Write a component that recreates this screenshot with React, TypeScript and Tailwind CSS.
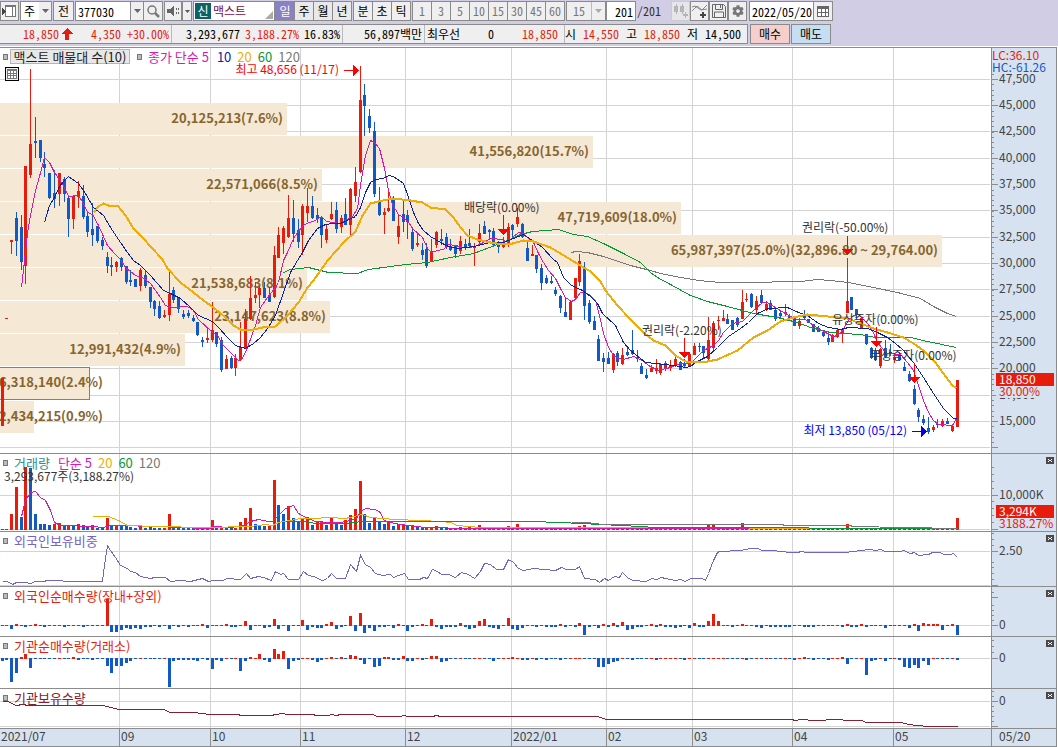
import React, { useState } from 'react';
import { FaCog } from 'react-icons/fa';

const UP = '#e81c0c';
const DOWN = '#1259c8';
const GRID = '#d3d3d3';
const LINE = '#8c8c8c';

const MONTHS = [
    { x: 119, label: '09' },
    { x: 210, label: '10' },
    { x: 300, label: '11' },
    { x: 405, label: '12' },
    { x: 511, label: '2022/01' },
    { x: 606, label: '02' },
    { x: 692, label: '03' },
    { x: 792, label: '04' },
    { x: 893, label: '05' },
];

const PRICES = [
    { y: 79, label: '47,500' },
    { y: 105, label: '45,000' },
    { y: 131, label: '42,500' },
    { y: 158, label: '40,000' },
    { y: 184, label: '37,500' },
    { y: 210, label: '35,000' },
    { y: 237, label: '32,500' },
    { y: 263, label: '30,000' },
    { y: 289, label: '27,500' },
    { y: 316, label: '25,000' },
    { y: 342, label: '22,500' },
    { y: 368, label: '20,000' },
    { y: 395, label: '17,500' },
    { y: 421, label: '15,000' },
    { y: 447, label: '' },
];

const BANDS = [
    { y: 103, w: 287, end: 283, label: '20,125,213(7.6%)' },
    { y: 136, w: 593, end: 589, label: '41,556,820(15.7%)' },
    { y: 169, w: 322, end: 318, label: '22,571,066(8.5%)' },
    { y: 202, w: 681, end: 677, label: '47,719,609(18.0%)' },
    { y: 235, w: 942, end: 938, label: '65,987,397(25.0%)(32,896.80 ~ 29,764.00)' },
    { y: 268, w: 307, end: 303, label: '21,538,683(8.1%)' },
    { y: 301, w: 330, end: 326, label: '23,147,623(8.8%)' },
    { y: 334, w: 185, end: 181, label: '12,991,432(4.9%)' },
    { y: 367, w: 90, end: 103, label: '6,318,140(2.4%)', current: true },
    { y: 401, w: 34, end: 103, label: '2,434,215(0.9%)' },
];

const EVENTS = [
    { x: 503, y: 215, tip: 235, tx: 464, ty: 212, label: '배당락(0.00%)' },
    { x: 684, y: 338, tip: 358, tx: 642, ty: 335, label: '권리락(-2.20%)' },
    { x: 847, y: 236, tip: 255, tx: 802, ty: 232, label: '권리락(-50.00%)' },
    { x: 876, y: 327, tip: 347, tx: 832, ty: 324, label: '유상증자(0.00%)' },
    { x: 914, y: 363, tip: 383, tx: 870, ty: 360, label: '무상증자(0.00%)' },
];

// one candle per entry: high, body top, body bottom, low, colour
const CANDLES = `378 378 426 426 r|318 318 319 319 r|240 240 242 254 r|212 218 241 256 b|215 227 262 270 b|166 166 266 284 r|69 144 175 178 r|117 141 143 158 b|140 140 158 162 b|152 164 168 177 b
173 173 198 199 b|170 193 199 208 b|173 173 194 206 r|177 179 194 202 b|195 198 219 237 b|196 196 219 229 r|181 191 197 208 r|185 196 217 219 b|212 216 232 237 b|203 229 235 246 b
226 226 241 243 b|237 240 246 250 b|252 257 266 273 b|257 265 267 276 b|261 262 267 272 r|257 258 267 271 b|266 266 282 284 b|270 280 282 286 b|279 279 287 287 b|268 270 286 291 r
271 275 286 288 b|287 287 302 308 b|300 301 309 316 b|301 306 318 319 b|310 315 317 318 r|272 294 315 321 r|287 290 300 303 b|297 297 309 313 b|310 314 317 319 b|310 313 316 318 b
315 318 321 322 b|322 322 335 336 b|337 340 342 347 b|329 338 340 343 r|302 330 340 342 r|332 332 344 347 b|337 340 370 372 b|355 359 369 369 r|356 358 368 369 b|354 358 368 376 r
322 347 360 361 r|309 319 348 349 r|276 298 319 320 r|282 295 298 303 r|286 288 295 308 r|282 288 298 298 b|287 295 302 302 b|246 255 297 298 r|227 235 258 258 r|226 228 243 254 r
195 218 237 238 r|200 218 234 242 b|219 230 242 248 b|204 206 235 255 r|188 206 213 222 r|196 206 218 219 b|208 215 219 223 b|217 218 235 248 b|225 229 240 243 r|202 214 219 220 r
202 210 229 233 b|215 218 227 233 r|198 214 225 225 b|188 189 225 235 r|167 182 196 202 r|66 100 172 173 r|84 95 106 136 b|109 116 128 133 b|122 131 194 197 b|187 202 215 216 b
208 212 215 234 r|189 208 211 212 r|196 200 221 221 b|214 226 237 244 r|199 214 222 232 b|210 215 222 239 b|228 232 249 251 b|232 243 245 247 r|243 250 255 260 b|243 249 266 268 b
239 251 261 261 r|231 232 245 248 r|229 239 241 245 b|233 237 247 249 b|239 246 250 251 b|246 246 254 258 b|236 241 251 254 r|239 244 248 250 b|229 243 246 247 b|243 246 248 266 r
224 233 242 246 r|221 226 234 234 b|229 230 232 238 b|228 231 245 246 b|241 243 247 253 b|237 242 247 248 r|223 227 243 247 r|224 225 230 238 b|208 217 224 227 r|223 224 237 238 b
241 248 261 261 b|245 254 256 256 r|255 255 269 273 b|264 268 283 290 b|275 278 283 284 b|276 281 283 284 b|287 290 294 296 b|295 296 308 313 b|298 312 317 317 b|300 302 320 320 r
278 278 298 300 r|254 261 282 286 r|262 269 306 320 b|300 303 322 324 b|316 321 330 330 b|335 339 361 361 b|353 358 362 372 b|352 358 364 364 b|353 354 370 373 r|351 353 362 366 b
348 355 364 365 r|347 352 355 356 b|330 350 354 355 b|350 357 359 362 b|363 366 374 374 b|369 375 378 379 b|365 368 372 372 r|359 368 371 374 r|363 364 373 375 r|361 363 369 371 r
360 366 368 371 r|357 359 366 367 r|361 362 370 370 b|359 364 366 368 b|352 354 366 366 r|343 346 355 355 r|343 346 347 352 b|346 346 353 358 b|317 340 359 362 r|321 323 348 352 r
316 320 321 330 r|310 318 321 321 r|314 319 324 324 b|320 320 330 330 b|317 318 325 327 b|290 302 319 319 r|293 299 300 302 r|293 294 307 308 b|296 301 310 315 r|290 295 303 303 b
301 304 309 311 r|300 303 310 310 b|307 310 319 321 b|310 313 316 318 b|304 312 314 316 r|314 316 318 318 b|318 318 326 326 b|318 321 326 329 r|310 316 318 320 b|319 319 323 323 b
324 324 332 332 b|326 328 332 332 b|331 332 336 337 b|335 338 342 345 b|334 335 342 342 r|328 330 337 338 r|329 329 334 343 r|258 301 313 313 r|297 297 310 310 b|309 309 315 320 b
317 318 328 329 r|334 334 344 345 b|347 348 358 359 b|348 351 360 361 b|348 349 366 368 r|340 348 357 358 b|344 352 354 356 b|356 357 360 363 r|352 354 360 361 b|362 367 371 371 b
371 374 381 382 b|385 389 404 405 b|408 410 417 422 b|415 419 423 425 b|417 428 432 434 b|425 427 430 432 r|419 424 425 428 b|419 421 426 427 r|418 421 424 424 b|425 426 431 432 r
380 380 427 427 r`
    .split(/[|\n]/)
    .map((row) => {
        const [high, top, bottom, low, color] = row.trim().split(' ');
        return { high: +high, top: +top, bottom: +bottom, low: +low, color: color === 'r' ? UP : DOWN };
    });

const MA5 = '21,287 27,233 30,215 35,190 39,176 44,157 49,162 54,172 59,179 64,187 68,196 78,195 83,203 87,212 92,214 98,225 107,245 115,254 120,259 125,267 135,275 142,277 150,283 160,297 165,305 172,307 187,306 193,310 198,319 212,332 217,335 223,345 230,352 238,360 242,358 247,347 255,325 260,307 267,297 275,287 278,282 283,260 287,252 293,238 297,232 303,225 308,222 313,221 321,216 326,221 340,223 345,220 352,216 357,208 360,185 365,155 370,140 374,142 379,148 384,168 388,190 392,204 398,214 403,217 408,222 413,229 422,237 427,248 431,252 437,250 443,249 448,244 455,245 463,247 470,247 477,245 483,242 490,238 502,239 507,242 512,237 518,232 522,233 527,237 533,242 538,253 543,262 548,270 555,278 560,288 565,297 571,301 575,299 580,292 585,292 590,295 595,300 599,315 603,333 608,347 613,355 618,358 623,359 633,356 642,360 648,365 658,370 670,367 680,363 690,363 695,358 703,350 713,345 718,340 723,332 732,323 742,321 748,315 755,308 762,302 767,302 773,306 780,310 788,315 797,319 805,319 813,325 823,331 833,336 837,335 842,330 848,320 853,315 858,314 862,318 867,323 872,330 877,342 881,347 886,353 900,354 907,362 913,370 918,385 923,400 928,412 933,420 938,424 952,425 956,418';
const MA10 = '44,222 49,205 54,197 59,186 64,180 68,176 78,183 85,193 93,207 103,215 112,230 120,242 127,252 133,260 140,265 150,275 163,290 170,293 180,298 190,307 198,315 212,321 218,327 227,337 235,345 245,348 253,343 260,337 267,328 275,315 283,292 290,272 297,260 302,252 308,240 317,228 325,224 333,223 340,223 355,216 360,207 365,192 370,182 375,179 383,178 388,175 393,176 403,183 408,197 413,212 418,223 423,230 430,236 440,242 448,246 458,248 473,246 490,242 503,242 513,238 523,234 532,240 542,247 553,259 557,262 563,277 571,285 582,290 590,296 597,303 602,313 615,325 623,342 630,350 640,358 645,362 655,363 673,365 685,367 690,366 695,362 707,356 717,347 728,336 740,328 748,322 757,313 768,308 787,307 798,312 807,315 818,323 828,327 840,329 848,327 867,328 877,332 887,337 895,343 902,349 913,362 923,377 933,393 943,408 953,418 956,418';
const MA20 = '93,212 98,206 103,203 108,205 117,205 125,215 133,228 143,238 150,246 162,259 167,268 180,282 193,292 203,300 213,307 225,317 233,325 240,329 253,329 262,327 275,326 287,315 298,302 307,287 313,280 325,263 328,259 343,242 355,231 362,215 370,203 378,201 392,198 410,200 422,202 430,207 445,209 453,217 460,227 467,235 477,239 490,242 503,244 512,243 523,240 533,241 550,247 560,253 570,259 578,264 590,271 600,281 605,290 617,305 630,319 643,332 653,340 665,345 675,355 685,361 702,362 717,359 737,350 753,337 767,330 780,321 793,317 807,314 827,316 847,318 860,323 873,328 887,332 903,337 913,343 923,350 935,362 942,372 952,385 956,388';
const MA60 = '283,272 290,269 308,267 328,272 357,273 368,269 405,264 427,262 450,257 473,253 497,244 512,238 520,234 532,231 558,229 573,234 587,236 603,243 623,253 640,262 650,272 657,277 670,284 690,295 707,301 727,306 753,313 777,317 797,322 810,327 830,332 843,333 860,334 875,337 910,337 927,341 956,347';
const MA120 = '571,252 575,251 587,252 603,256 630,265 650,270 660,273 680,277 698,280 720,282 763,282 780,281 800,281 817,279 830,280 848,282 873,287 897,292 920,298 933,306 947,313 956,316';

// bar heights, negative numbers are down days
const VOLUME = [
    -1, -1, 16, 43, -13, 63, -62, -16, -6, -6, -5, 6, 7, -4, 4, -4, 6, -5, -3, 5, -2, -2, 12, -4, 4, -4, -5, -3, -2, 4,
    -2, -3, -2, -2, 2, 16, -3, -2, -2, -2, -2, 3, -2, 2, 10, -3, 3, -2, -2, 2, 8, 12, 22, -6, -5, -4, 4, 50, -25, -16,
    24, -12, -8, 12, 13, -5, 9, 9, -5, 12, -8, -5, 10, 15, 21, 49, -16, -7, 12, -8, -6, 8, -4, 6, 6, -4, 5, -3, -2, 2,
    3, 4, -2, -2, -2, -2, 3, -2, 3, 2, 5, -3, -2, 2, 2, 2, 4, -3, 6, -2, -2, 2, -2, -2, -2, -2, -2, -2, -2, 3, 3, 4, 5,
];
const VOLUME_LATE: Record<number, number> = { 132: 4, 148: 5, 149: 5, 155: 7, 177: 6, 200: 12 };

const VOL_MA5 = '21,516 25,500 30,492 35,491 40,497 45,500 50,510 54,522 60,525 92,526 103,527 110,525 125,525 150,526 190,527 195,528 210,528 212,526 230,527 243,525 250,521 258,519 268,521 272,521 278,515 285,508 293,505 298,513 305,517 315,521 325,522 340,522 350,520 356,518 360,511 365,508 374,509 379,511 384,520 390,522 400,524 425,527 470,528 957,528';
const VOL_MA20 = '92,516 108,516 118,520 127,525 155,526 205,527 250,526 265,524 272,525 278,522 290,520 300,518 312,518 330,517 345,518 362,514 370,517 395,519 420,520 440,521 450,522 457,525 480,527 650,527 845,528';
const VOL_MA60 = '285,521 305,521 315,523 345,523 362,521 530,521 560,522 600,524 640,526 655,527 957,528';
const VOL_MA120 = '571,522 587,522 602,524 782,524 784,525 850,525 852,526 905,527 957,528';

const FOREIGN = '2,581 7,581 12,584 16,582 25,582 30,583 35,581 43,581 47,580 62,580 63,581 102,581 104,565 107,545 110,550 115,557 120,565 127,568 130,571 135,572 140,576 145,577 150,578 154,577 165,577 170,581 180,580 190,581 202,578 208,581 213,580 222,580 227,578 240,579 246,573 250,578 258,576 263,577 271,580 275,571 280,574 283,573 288,579 298,579 303,571 308,575 313,576 322,580 327,578 331,573 336,578 345,578 350,564 356,571 360,555 365,564 370,567 375,573 382,575 390,574 393,577 398,575 404,573 408,579 419,579 423,577 427,578 432,569 437,571 441,574 448,574 455,577 461,572 468,574 474,578 480,571 484,563 490,564 496,569 503,569 508,559 513,562 518,568 523,570 533,568 555,570 561,567 566,569 575,569 579,566 584,578 595,579 599,582 604,578 608,580 614,576 619,577 622,572 628,578 633,580 646,581 651,578 656,579 661,577 665,578 675,580 680,579 685,581 690,578 702,578 705,580 708,573 713,560 717,552 719,551 740,550 750,548 758,548 761,550 772,550 790,552 798,552 800,551 807,552 845,552 860,550 870,549 875,550 880,549 885,551 900,551 903,550 910,553 914,552 918,555 928,554 932,552 940,552 943,554 950,554 953,553 957,557';
const HOLDING = '2,701 7,701 16,705 22,704 28,705 102,705 119,709 164,709 169,712 195,712 200,713 210,714 238,714 240,715 272,715 274,714 283,713 286,714 312,714 316,715 328,715 331,714 336,715 340,714 372,714 377,716 400,716 403,715 408,716 432,716 436,715 440,716 597,716 606,719 792,719 794,720 802,719 812,720 840,719 845,720 862,720 865,722 901,722 908,724 917,725 927,726 957,726';

const FOREIGN_NET: Record<number, number> = {
    2: -3, 3: 1, 5: -1, 7: 1, 9: -1, 13: -1, 17: -1, 22: 26, 23: -6, 24: -6, 25: -4, 26: -2, 27: -3, 28: -2, 29: -3, 30: -1, 31: -1, 33: -1, 35: -3, 37: -1, 39: -1,
    42: 1, 43: -2, 47: 1, 48: -1, 49: -1, 51: 4, 52: -4, 55: -2, 56: -1, 57: 6, 58: -3, 60: -5, 63: 5, 64: -4, 65: -1, 66: -2, 67: -2, 68: 1, 69: 3, 70: -3, 71: -1,
    73: 9, 74: -5, 75: 12, 76: -7, 77: -2, 78: -5, 79: -1, 80: -1, 82: -2, 83: 1, 85: -5, 86: -1, 88: 1, 90: 6, 91: -1, 92: -3, 93: -1, 94: -1, 95: -1, 96: 2, 97: -1,
    98: -3, 99: -2, 100: 4, 101: 6, 102: -1, 103: -2, 104: -3, 106: 7, 107: -3, 108: -4, 109: -2, 112: -1, 114: -1, 115: -1, 116: -1, 117: 1, 118: -1, 120: -1, 121: 2,
    122: -9, 123: -1, 125: -2, 126: 1, 127: -1, 128: 2, 129: -1, 130: 3, 131: -4, 132: -3, 133: -1, 134: -1, 136: 1, 137: -1, 138: 1, 139: -1, 140: -1, 141: -2, 142: -1,
    144: -2, 145: 2, 146: -1, 147: -1, 148: 4, 149: 11, 150: 4, 153: -1, 155: 1, 158: -1, 159: -2, 161: -1, 162: -1, 163: -1, 164: -1, 165: -1, 168: -1, 169: -1, 170: -1,
    176: -1, 177: 1, 178: -1, 179: -1, 180: 1, 181: -1, 185: -2, 190: -2, 191: 1, 192: -5, 193: 2, 194: 1, 195: 1, 196: 1, 197: -4, 199: 1, 200: -9,
};
const INST_NET: Record<number, number> = {
    0: -2, 1: -1, 2: -23, 3: -14, 4: 1, 5: 4, 6: -9, 15: 1, 16: -1, 19: -1, 22: -7, 23: -14, 24: -7, 25: -7, 26: -4, 27: -2, 35: -28, 36: -2, 37: -1, 38: -1, 39: -1,
    40: -1, 41: -2, 43: -1, 44: -10, 45: -1, 46: -2, 50: -12, 51: -2, 52: 1, 54: 4, 55: -1, 56: -3, 57: 9, 58: 4, 59: 7, 60: -10, 61: -2, 62: -1, 65: -1, 66: -3, 67: -1,
    69: 1, 71: 1, 73: 3, 74: 2, 75: -1, 76: -5, 78: -8, 79: -7, 80: 1, 81: 1, 82: -1, 83: -1, 84: 2, 85: -2, 86: -2, 88: -1, 90: 2, 91: 2, 92: -3, 93: -2, 103: -2,
    107: 1, 109: -1, 110: -1, 112: -1, 114: -1, 117: -1, 125: -8, 126: -8, 127: -5, 128: -3, 129: -2, 132: -1, 137: -1, 143: -1, 156: -1, 166: -1, 168: 1, 170: -1,
    173: -1, 176: 1, 177: -5, 181: -16, 182: -2, 183: -1, 185: -2, 188: -1, 189: -8, 190: -9, 191: -6, 192: -9, 193: -2, 194: -6, 200: -1,
};

const xAt = (i: number) => Math.floor(2 + i * 4.775);

const Line = ({ points, color, width = 1 }: { points: string; color: string; width?: number }) => (
    <polyline points={points} fill="none" stroke={color} strokeWidth={width} transform="translate(0.5 0.5)" />
);

const NetBars = ({ data, zero }: { data: Record<number, number>; zero: number }) => (
    <>
        {CANDLES.map((c, i) => {
            const v = data[i] || 0;
            if (v === 0) {
                return <rect key={i} x={xAt(i) - 1} y={zero} width={3} height={1} fill={c.color} />;
            }
            return <rect key={i} x={xAt(i) - 1} y={v > 0 ? zero - v : zero} width={3} height={Math.abs(v) + 1} fill={v > 0 ? UP : DOWN} />;
        })}
    </>
);

const Marker = () => <span className="h-[6px] w-[5px] shrink-0 border border-[#777] bg-[#bbb]" />;

const CloseButton = () => (
    <button aria-label="닫기" className="absolute top-[3px] right-[2px] h-[7px] w-2 bg-[#4a4a4a]">
        <svg viewBox="0 0 8 7" className="block h-full w-full" shapeRendering="crispEdges">
            <path d="M2 2h1v1h-1zM5 2h1v1h-1zM3 3h2v1h-2zM2 4h1v1h-1zM5 4h1v1h-1z" fill="#fff" />
        </svg>
    </button>
);

type PanelProps = {
    top: number;
    height: number;
    hLines: number[];
    ticks: number[];
    majors: number[];
    axis?: React.ReactNode;
    legend?: React.ReactNode;
    closable?: boolean;
    children: React.ReactNode;
};

const Panel = ({ top, height, hLines, ticks, majors, axis, legend, closable = true, children }: PanelProps) => (
    <section className="grid grid-cols-[991fr_65fr] border-t border-[#8c8c8c]">
        <div className="relative">
            <svg viewBox={`0 ${top} 991 ${height}`} className="block w-full overflow-visible text-[12px]" shapeRendering="crispEdges">
                {MONTHS.map((m) => <rect key={m.x} x={m.x} y={top} width={1} height={height} fill={GRID} />)}
                {hLines.map((y) => <rect key={y} x={0} y={y} width={990} height={1} fill={GRID} />)}
                {children}
            </svg>
            {legend}
        </div>
        <div className="relative bg-[#d6e2f0]">
            <svg viewBox={`991 ${top} 65 ${height}`} className="block w-full overflow-visible text-[12px]" fill="#444" shapeRendering="crispEdges">
                <rect x={991} y={top} width={1} height={height} fill={LINE} />
                {ticks.map((y) => <rect key={y} x={992} y={y} width={2} height={1} fill={LINE} />)}
                {majors.map((y) => <rect key={y} x={992} y={y} width={6} height={1} fill={LINE} />)}
                {axis}
            </svg>
            {closable && <CloseButton />}
        </div>
    </section>
);

const Legend = ({ children }: { children: React.ReactNode }) => (
    <div className="absolute top-px left-[3px] flex h-4 items-center gap-[6px] text-[13px] leading-4 whitespace-nowrap">
        <Marker />
        {children}
    </div>
);

const minorTicks = Array.from({ length: 72 }, (_, i) => Math.round(79 + (i - 1) * 5.2632)).filter((y) => y < 452);

const PricePanel = () => (
    <Panel
        top={48}
        height={405}
        hLines={PRICES.map((p) => p.y)}
        ticks={minorTicks}
        majors={PRICES.map((p) => p.y)}
        closable={false}
        axis={
            <>
                {PRICES.map((p) => <text key={p.y} x={999} y={p.y + 4}>{p.label}</text>)}
                <rect x={992} y={48} width={64} height={26} fill="#d6e2f0" />
                <text x={992} y={60} fill={UP}>LC:36.10</text>
                <text x={992} y={72} fill={DOWN}>HC:-61.26</text>
                <rect x={996} y={386} width={58} height={12} fill="#d6e2f0" />
                <rect x={996} y={373} width={58} height={13} fill={UP} />
                <text x={999} y={384} fill="#fff">18,850</text>
                <text x={999} y={396} fill={UP}>30.00%</text>
            </>
        }
        legend={
            <>
                <div className="absolute top-px left-[3px] flex h-[15px] items-center text-[13px] leading-3 whitespace-nowrap">
                    <Marker />
                    <button className="ml-[2px] h-[15px] w-[120px] border border-[#b5b5b5] bg-[#e8e8e8] leading-3 text-[#222]">맥스트 매물대 수(10)</button>
                    <span className="ml-[7px] flex items-center gap-[6px]">
                        <Marker />
                        <span className="text-[#d918b0]">종가 단순 5</span>
                    </span>
                    <span className="ml-2 flex gap-[6px]">
                        <span className="text-[#0a22a0]">10</span>
                        <span className="text-[#efac05]">20</span>
                        <span className="text-[#0a9632]">60</span>
                        <span className="text-[#777]">120</span>
                    </span>
                </div>
                <button aria-label="표 보기" className="absolute top-[19px] left-[5px] h-[14px] w-[14px] border border-black bg-[#eee]">
                    <svg viewBox="0 0 12 12" className="block h-3 w-3" shapeRendering="crispEdges">
                        <rect x={1} y={1} width={10} height={10} fill="#777" />
                        <path d="M2 3h2v2h-2zM5 3h2v2h-2zM8 3h2v2h-2zM2 6h2v1h-2zM5 6h2v1h-2zM8 6h2v1h-2zM2 8h2v2h-2zM5 8h2v2h-2zM8 8h2v2h-2z" fill="#fff" />
                    </svg>
                </button>
            </>
        }
    >
        {BANDS.map((b) => (
            <g key={b.y}>
                <rect x={0} y={b.y} width={b.w} height={32} fill="#f5e8d5" />
                {b.current && <path d={`M0 ${b.y + 0.5}H${b.w - 0.5}V${b.y + 32.5}H0`} fill="none" stroke="#808080" />}
                <text x={b.end} y={b.y + 20} textAnchor="end" fill="#86652f" className="text-[13px] font-bold">{b.label}</text>
            </g>
        ))}
        {CANDLES.map((c, i) => (
            <g key={i} fill={c.color}>
                <rect x={xAt(i)} y={c.high} width={1} height={c.low - c.high} />
                <rect x={xAt(i) - 1} y={c.top} width={3} height={c.bottom - c.top} />
            </g>
        ))}
        <Line points={MA120} color="#777" />
        <Line points={MA60} color="#0a9632" />
        <Line points={MA5} color="#d918b0" />
        <Line points={MA10} color="#0a22a0" />
        <Line points={MA20} color="#efac05" width={2} />
        {EVENTS.map((e) => (
            <g key={e.label} fill="#f00">
                <rect x={e.x} y={e.y} width={1} height={e.tip - e.y - 5} />
                <path d={`M${e.x - 5} ${e.tip - 6}H${e.x + 6}L${e.x + 0.5} ${e.tip}z`} />
                <text x={e.tx} y={e.ty} fill="#333">{e.label}</text>
            </g>
        ))}
        <g fill="#f00">
            <text x={339} y={74} textAnchor="end">최고 48,656 (11/17)</text>
            <rect x={344} y={70} width={10} height={1} />
            <path d="M353 65V76L359 70.5z" />
        </g>
        <g fill="#00f">
            <text x={907} y={435} textAnchor="end">최저 13,850 (05/12)</text>
            <rect x={912} y={431} width={10} height={1} />
            <path d="M921 426V437L927 431.5z" />
        </g>
    </Panel>
);

const VolumePanel = () => (
    <Panel
        top={454}
        height={77}
        hLines={[495, 529]}
        ticks={[467, 474, 481, 488, 501, 508, 515, 522]}
        majors={[495, 529]}
        axis={
            <>
                <text x={999} y={499}>10,000K</text>
                <rect x={996} y={505} width={58} height={13} fill={UP} />
                <text x={999} y={516} fill="#fff">3,294K</text>
                <text x={999} y={528} fill={UP}>3188.27%</text>
            </>
        }
        legend={
            <>
                <Legend>
                    <span className="flex gap-2 text-[#d918b0]"><span className="text-[#2a8f93]">거래량</span>단순 5</span>
                    <span className="text-[#efac05]">20</span>
                    <span className="text-[#0a9632]">60</span>
                    <span className="text-[#777]">120</span>
                </Legend>
                <p className="absolute top-4 left-1 text-[12px] leading-3 text-[#333]">3,293,677주(3,188.27%)</p>
            </>
        }
    >
        {CANDLES.map((c, i) => {
            const v = VOLUME[i] ?? VOLUME_LATE[i] ?? (c.color === UP ? 1 : -1);
            return <rect key={i} x={xAt(i) - 1} y={530 - Math.abs(v)} width={3} height={Math.abs(v)} fill={v > 0 ? UP : DOWN} />;
        })}
        <Line points={VOL_MA5} color="#d918b0" />
        <Line points={VOL_MA20} color="#efac05" />
        <Line points={VOL_MA60} color="#0a9632" />
        <Line points={VOL_MA120} color="#777" />
    </Panel>
);

const Arrow = ({ className = 'text-[#666]' }: { className?: string }) => (
    <svg viewBox="0 0 7 4" className={`pointer-events-none block h-1 w-[7px] ${className}`}>
        <path d="M0 0H7L3.5 4z" fill="currentColor" />
    </svg>
);

const BTN = 'flex h-5 shrink-0 items-center justify-center border border-[#8a8a8a] bg-[#efefef]';

const Toolbar = () => {
    const [period, setPeriod] = useState('일');
    const [code, setCode] = useState('377030');
    const [count, setCount] = useState('201');
    const [date, setDate] = useState('2022/05/20');

    return (
        <div className="flex items-center">
            <button aria-label="창 열기" className={`${BTN} w-[19px]`}>
                <svg viewBox="0 0 16 16" className="h-4 w-4" shapeRendering="crispEdges">
                    <path d="M3.5 2.5h10v11h-10zM3.5 3.5h10M10.5 4v9" fill="#fff" stroke="#777" />
                    <path d="M0 5v7l4-3.5z" fill="#444" />
                </svg>
            </button>
            <div className="relative ml-px flex h-5 w-8 border border-[#8a8a8a] bg-white">
                <select aria-label="구분" className="w-full appearance-none pl-[3px] leading-[18px] outline-none">
                    <option>주</option>
                </select>
                <span className="pointer-events-none absolute top-0 right-0 flex h-full w-3 items-center justify-center bg-[#efefef]"><Arrow /></span>
            </div>
            <button className={`${BTN} ml-px w-[21px]`}>전</button>
            <input aria-label="종목코드" value={code} onChange={(e) => setCode(e.target.value)} className="ml-px h-5 w-14 border border-[#8a8a8a] bg-white pl-[2px] outline-none" />
            <button aria-label="종목 목록" className={`${BTN} -ml-px w-[14px]`}><Arrow /></button>
            <button aria-label="검색" className={`${BTN} -ml-px w-5`}>
                <svg viewBox="0 0 16 16" className="h-4 w-4" fill="none" stroke="#777">
                    <circle cx={7} cy={7} r={4} strokeWidth={1.5} />
                    <path d="M10 10l4 4" strokeWidth={2.5} />
                </svg>
            </button>
            <button aria-label="소리" className={`${BTN} ml-px w-[18px]`}>
                <svg viewBox="0 0 16 16" className="h-4 w-4" fill="#666" shapeRendering="crispEdges">
                    <path d="M2 6h3l4-4v12l-4-4h-3zM11 5h1v2h-1zM11 9h1v2h-1zM13 5h1v2h-1zM13 9h1v2h-1z" />
                </svg>
            </button>
            <button aria-label="소리 설정" className={`${BTN} w-[10px]`}>
                <svg viewBox="0 0 5 3" className="h-[3px] w-[5px]"><path d="M0 0H5L2.5 3z" fill="#555" /></svg>
            </button>
            <div className="relative ml-px flex h-5 w-[82px] items-center border border-[#8a8a8a] bg-white pl-px">
                <span className="flex h-4 w-4 items-center justify-center bg-[#0c6264] text-white">신</span>
                <span className="ml-[2px] text-[#7a0a48]">맥스트</span>
                <svg viewBox="0 0 8 8" className="absolute right-px bottom-px h-2 w-2"><path d="M8 0V8H0z" fill="#aaa" /></svg>
            </div>
            {['일', '주', '월', '년'].map((p) => (
                <button
                    key={p}
                    onClick={() => setPeriod(p)}
                    className={`-mr-px flex h-5 w-5 shrink-0 items-center justify-center border border-[#8a8a8a] ${period === p ? 'bg-[#8a80c4] text-white' : 'bg-[#e9e9e9]'}`}
                >
                    {p}
                </button>
            ))}
            <div className="ml-[2px] flex">
                {['분', '초', '틱'].map((p) => (
                    <button key={p} onClick={() => setPeriod(p)} className={`${BTN} -mr-px w-5`}>{p}</button>
                ))}
            </div>
            <div className="ml-[2px] flex text-[#777]">
                {['1', '3', '5', '10', '15', '30', '45', '60'].map((n) => (
                    <button key={n} className={`${BTN} -mr-px w-5`}>{n}</button>
                ))}
            </div>
            <div className="relative ml-[2px] flex h-5 w-10 border border-[#8a8a8a] bg-[#efefef] text-[#777]">
                <select aria-label="분 주기" className="w-full appearance-none pl-[6px] leading-[18px] outline-none">
                    <option>15</option>
                </select>
                <span className="pointer-events-none absolute top-0 right-0 flex h-full w-[14px] items-center justify-center border-l border-[#bbb]"><Arrow className="text-[#aaa]" /></span>
            </div>
            <input aria-label="봉 개수" value={count} onChange={(e) => setCount(e.target.value)} className="h-5 w-[30px] border border-[#8a8a8a] bg-white pr-[2px] text-right outline-none" />
            <span className="ml-px w-[34px] text-[#333]">/201</span>
            <button aria-label="차트 추가" className="flex h-5 w-[19px] items-center justify-center border border-[#ccc] bg-[#e6e6ea]">
                <svg viewBox="0 0 16 16" className="h-4 w-4 shrink-0" fill="#b5b5b5" shapeRendering="crispEdges">
                    <path d="M1 3h4v6h-4zM7 3h4v6h-4zM3 1h1v10h-1zM9 1h1v10h-1zM10 11h5v2h-5zM12 9h1v6h-1z" />
                </svg>
            </button>
            <button aria-label="지표 추가" className={`${BTN} w-[19px]`}>
                <svg viewBox="0 0 16 16" className="h-4 w-4 shrink-0" fill="none" stroke="#888">
                    <path d="M0 8l5-5 5 4 5-5M0 4l3-1 6 4 6-1" />
                    <path d="M8 12h6M11 9v6" stroke="#444" strokeWidth={2} />
                </svg>
            </button>
            <button aria-label="저장" className={`${BTN} w-[19px]`}>
                <svg viewBox="0 0 16 16" className="h-4 w-4 shrink-0" fill="none" stroke="#666">
                    <path d="M1.5 1.5h11l2 2v11h-13zM4.5 1.5v5h7v-5M9.5 2v3M3.5 14v-5h9v5" />
                </svg>
            </button>
            <button aria-label="설정" className={`${BTN} w-[19px]`}><FaCog size={12} color="#777" /></button>
            <input aria-label="기준일" value={date} onChange={(e) => setDate(e.target.value)} className="ml-[2px] h-5 w-[65px] border border-[#8a8a8a] bg-white pl-[2px] outline-none" />
            <button aria-label="달력" className={`${BTN} -ml-px w-5`}>
                <svg viewBox="0 0 12 11" className="h-[11px] w-3" shapeRendering="crispEdges">
                    <rect x={0} y={0} width={12} height={11} fill="#666" />
                    <path d="M1 3h3v3h-3zM5 3h3v3h-3zM9 3h2v3h-2zM1 7h3v3h-3zM5 7h3v3h-3zM9 7h2v3h-2z" fill="#fff" />
                </svg>
            </button>
        </div>
    );
};

const CELL = 'flex h-full shrink-0 items-center justify-end border-r border-[#bbb] pr-[2px]';

const QuoteBar = () => (
    <div className="mt-[3px] flex">
        <div className="flex h-5 border border-l-0 border-[#8a8a8a] bg-[#efefef]">
            <div className={`${CELL} w-[172px] gap-[6px] text-[#e81c0c]`}>
                <span className="flex items-center gap-[2px]">
                    18,850
                    <svg viewBox="0 0 12 12" className="mr-3 h-3 w-3" shapeRendering="crispEdges"><path d="M6 0L12 6H8V12H4V6H0z" fill="#e81c0c" /></svg>
                </span>
                <span>4,350</span>
                <span>+30.00%</span>
            </div>
            <div className={`${CELL} w-[171px] gap-[5px]`}>
                <span>3,293,677</span>
                <span className="text-[#e81c0c]">3,188.27%</span>
                <span>16.83%</span>
            </div>
            <div className={`${CELL} w-[82px]`}>56,897백만</div>
            <div className={`${CELL} w-[140px]`}>
                <span className="mr-auto pl-[2px]">최우선</span>
                <span className="mr-7">0</span>
                <span className="mr-1 text-[#e81c0c]">18,850</span>
            </div>
            <div className="flex w-[182px] items-center justify-between pr-[6px]">
                <span>시</span><span className="text-[#e81c0c]">14,550</span>
                <span>고</span><span className="text-[#e81c0c]">18,850</span>
                <span>저</span><span>14,500</span>
            </div>
        </div>
        <button className="ml-[2px] h-5 w-10 border border-[#8a8a8a] bg-[#f5cfc9]">매수</button>
        <button className="ml-px h-5 w-10 border border-[#8a8a8a] bg-[#c5def1]">매도</button>
    </div>
);

export default function App() {
    return (
        <div className="bg-white font-['Noto_Sans_CJK_KR',sans-serif]">
            <header className="overflow-hidden border-b border-white bg-[#d0cde4] pt-px pb-[2px] font-['Noto_Sans_Mono_CJK_KR','Noto_Sans_CJK_KR',monospace] text-[12px] leading-[18px] text-black">
                <Toolbar />
                <QuoteBar />
            </header>
            <main className="mr-px border-r border-b border-[#8c8c8c]">
                <PricePanel />
                <VolumePanel />
                <Panel
                    top={532}
                    height={54}
                    hLines={[551, 585]}
                    ticks={[533, 539, 545, 562, 567, 573, 579]}
                    majors={[551, 585]}
                    axis={<text x={999} y={555}>2.50</text>}
                    legend={<Legend><span className="text-[#7464c4]">외국인보유비중</span></Legend>}
                >
                    <Line points={FOREIGN} color="#7464c4" />
                </Panel>
                <Panel
                    top={587}
                    height={49}
                    hLines={[625]}
                    ticks={[592, 605, 610, 615, 620]}
                    majors={[597, 625]}
                    axis={<text x={999} y={629}>0</text>}
                    legend={<Legend><span className="text-[#e81c0c]">외국인순매수량(장내+장외)</span></Legend>}
                >
                    <NetBars data={FOREIGN_NET} zero={625} />
                </Panel>
                <Panel
                    top={637}
                    height={51}
                    hLines={[658]}
                    ticks={[640, 646, 652]}
                    majors={[658]}
                    axis={<text x={999} y={662}>0</text>}
                    legend={<Legend><span className="text-[#e81c0c]">기관순매수량(거래소)</span></Legend>}
                >
                    <NetBars data={INST_NET} zero={658} />
                </Panel>
                <Panel
                    top={689}
                    height={39}
                    hLines={[701, 726]}
                    ticks={[691, 696, 706, 711, 716, 721]}
                    majors={[701, 726]}
                    axis={<text x={999} y={705}>0</text>}
                    legend={<Legend><span className="text-[#862030]">기관보유수량</span></Legend>}
                >
                    <Line points={HOLDING} color="#862030" />
                </Panel>
                <section className="border-t border-[#8c8c8c] bg-[#d6e2f0]">
                    <svg viewBox="0 729 1056 17" className="block w-full overflow-visible text-[12px]" fill="#444" shapeRendering="crispEdges">
                        <text x={1} y={741}>2021/07</text>
                        {MONTHS.map((m) => (
                            <g key={m.x}>
                                <rect x={m.x} y={729} width={1} height={17} fill={LINE} />
                                <text x={m.x + 2} y={741}>{m.label}</text>
                            </g>
                        ))}
                        <rect x={991} y={729} width={1} height={17} fill={LINE} />
                        <text x={999} y={741}>05/20</text>
                    </svg>
                </section>
            </main>
        </div>
    );
}
